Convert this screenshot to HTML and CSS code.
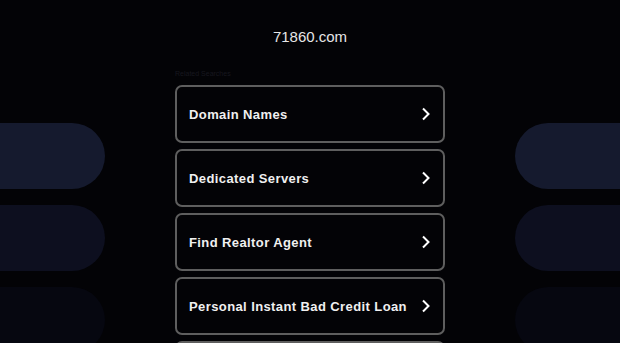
FILE: index.html
```html
<!DOCTYPE html>
<html>
    <head>
        <title>71860.com</title>
        <meta charset="utf-8" />
        <link rel="stylesheet" href="styles.css">
    </head>
    <body>
        <div class="page">
            <div class="deco left">
                <span class="pill p1"></span>
                <span class="pill p2"></span>
                <span class="pill p3"></span>
            </div>

            <div class="main">
                <h1 class="domain">71860.com</h1>
                <div class="related">Related Searches</div>
                <ul class="links">
                    <li><a href="#">Domain Names<svg class="chev" viewBox="0 0 10 14"><path d="M2 1.5 L7.5 7 L2 12.5"/></svg></a></li>
                    <li><a href="#">Dedicated Servers<svg class="chev" viewBox="0 0 10 14"><path d="M2 1.5 L7.5 7 L2 12.5"/></svg></a></li>
                    <li><a href="#">Find Realtor Agent<svg class="chev" viewBox="0 0 10 14"><path d="M2 1.5 L7.5 7 L2 12.5"/></svg></a></li>
                    <li><a href="#">Personal Instant Bad Credit Loan<svg class="chev" viewBox="0 0 10 14"><path d="M2 1.5 L7.5 7 L2 12.5"/></svg></a></li>
                    <li><a href="#" class="more"></a></li>
                </ul>
            </div>

            <div class="deco right">
                <span class="pill p1"></span>
                <span class="pill p2"></span>
                <span class="pill p3"></span>
            </div>
        </div>
    </body>
</html>
```

FILE: styles.css
```css
html, body {
    margin:             0;
    padding:            0;
    height:             100%;
    overflow:           hidden;
}

body {
    background:         #030306;
    color:              #eeeeee;
    font-family:        "Liberation Sans", Arial, sans-serif;
}

.page {
    display:            grid;
    grid-template-columns: 105px 1fr 105px;
    height:             100%;
}

/* Side decoration */
.deco {
    display:            flex;
    flex-direction:     column;
    gap:                16px;
    padding-top:        123px;
}

.pill {
    display:            block;
    height:             66px;
    flex-shrink:        0;
}

.left .pill {
    border-radius:      0 33px 33px 0;
}

.right .pill {
    border-radius:      33px 0 0 33px;
}

.p1 { background:       #151a2e; }
.p2 { background:       #0d0f1f; }
.p3 { background:       #060710; }

/* Centre column */
.main {
    display:            flex;
    flex-direction:     column;
    align-items:        center;
}

.domain {
    font-size:          15px;
    font-weight:        normal;
    color:              #e6e6e6;
    margin:             28px 0 0;
    line-height:        18px;
}

.related {
    width:              270px;
    font-size:          7px;
    color:              #17171f;
    margin-top:         23px;
    line-height:        9px;
}

.links {
    list-style:         none;
    margin:             7px 0 0;
    padding:            0;
    width:              270px;
    display:            flex;
    flex-direction:     column;
    gap:                6px;
}

.links a {
    display:            flex;
    align-items:        center;
    justify-content:    space-between;
    height:             54px;
    padding:            0 12px 0 12px;
    border:             2px solid #5e5e5e;
    border-radius:      7px;
    color:              #f0f0f0;
    text-decoration:    none;
    font-size:          13px;
    font-weight:        bold;
    letter-spacing:     0.4px;
    white-space:        nowrap;
}

.chev {
    width:              10px;
    height:             14px;
    fill:               none;
    stroke:             #ffffff;
    stroke-width:       2;
}
```
